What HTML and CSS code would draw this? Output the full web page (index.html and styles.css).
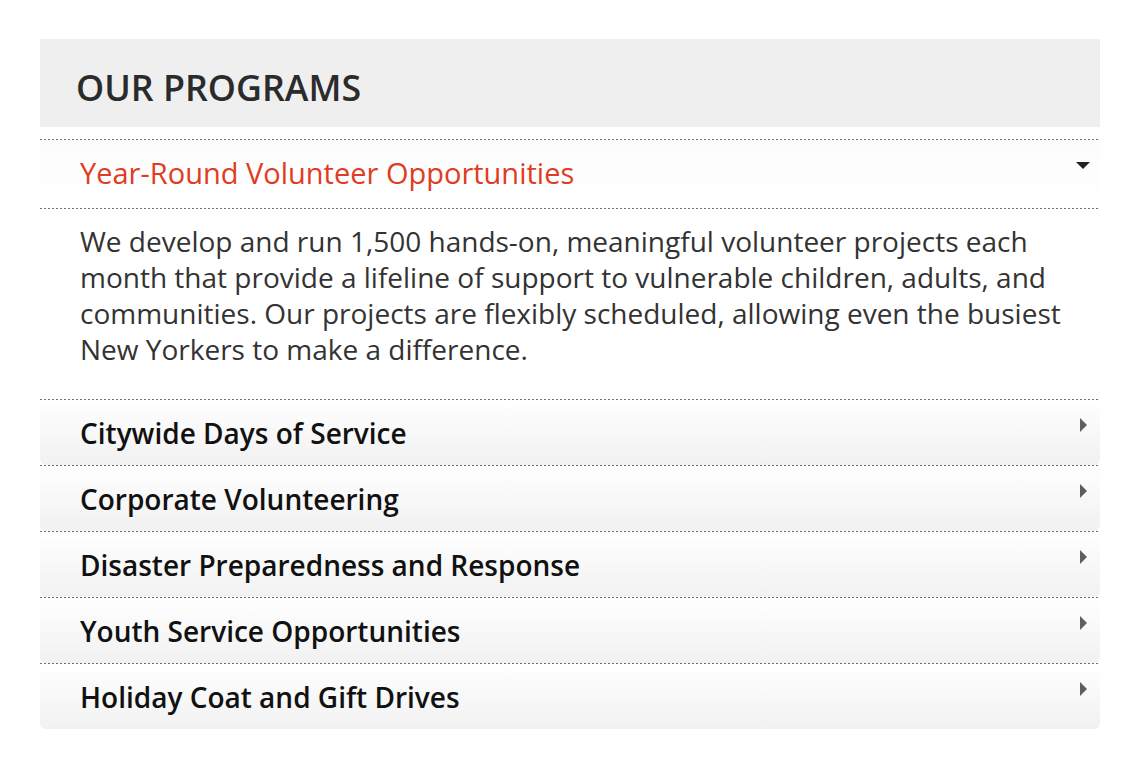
FILE: index.html
```html
<!DOCTYPE html>
<html lang="en">
<head>
<meta charset="utf-8">
<title>Our Programs</title>
<link rel="stylesheet" href="styles.css">
</head>
<body>
<section class="panel">
  <header class="panel-head">
    <h2 class="panel-title">OUR PROGRAMS</h2>
  </header>
  <div class="accordion">
    <div class="acc-item is-open">
      <div class="acc-head">
        <span class="acc-label">Year-Round Volunteer Opportunities</span>
        <span class="caret-down"></span>
      </div>
      <div class="acc-body">
        <p>We develop and run 1,500 hands-on, meaningful volunteer projects each month that provide a lifeline of support to vulnerable children, adults, and communities. Our projects are flexibly scheduled, allowing even the busiest New Yorkers to make a difference.</p>
      </div>
    </div>
    <div class="acc-item">
      <div class="acc-head"><span class="acc-label">Citywide Days of Service</span><span class="caret-right"></span></div>
    </div>
    <div class="acc-item">
      <div class="acc-head"><span class="acc-label">Corporate Volunteering</span><span class="caret-right"></span></div>
    </div>
    <div class="acc-item">
      <div class="acc-head"><span class="acc-label">Disaster Preparedness and Response</span><span class="caret-right"></span></div>
    </div>
    <div class="acc-item">
      <div class="acc-head"><span class="acc-label">Youth Service Opportunities</span><span class="caret-right"></span></div>
    </div>
    <div class="acc-item">
      <div class="acc-head"><span class="acc-label">Holiday Coat and Gift Drives</span><span class="caret-right"></span></div>
    </div>
  </div>
</section>
</body>
</html>
```

FILE: styles.css
```css
* { box-sizing: border-box; }
html, body { margin: 0; padding: 0; background: #fff; }
body { font-family: "Open Sans", "Noto Sans", sans-serif; }

.panel {
  width: 1060px;
  margin: 39px 0 0 40px;
}

.panel-head {
  background: #efefef;
  height: 88px;
  display: flex;
  align-items: center;
  padding: 8px 0 0 36px;
}
.panel-title {
  margin: 0;
  font-size: 35.8px;
  font-weight: 600;
  color: #2b2b2b;
}

.accordion { margin-top: 12px; }

.acc-item { position: relative; }
.acc-item::before {
  content: "";
  display: block;
  height: 1px;
  background: repeating-linear-gradient(to right, #6f6f6f 0 2px, transparent 2px 4px);
}

.acc-head {
  display: flex;
  align-items: center;
  justify-content: space-between;
  height: 65px;
  padding: 0 10px 0 40px;
  background: linear-gradient(#ffffff, #f1f1f1);
  border-radius: 0 0 6px 6px;
}
.acc-label {
  font-size: 28px;
  font-weight: 600;
  color: #111;
}

.is-open .acc-head {
  height: 68px;
  background: linear-gradient(#fcfcfc, #ffffff);
  border-radius: 0;
}
.is-open .acc-label {
  font-size: 29px;
  font-weight: 500;
  color: #e03c22;
  margin-top: -3px;
}

.caret-down {
  width: 0; height: 0;
  border-left: 7px solid transparent;
  border-right: 7px solid transparent;
  border-top: 7px solid #222;
  margin-top: -17px;
}
.caret-right {
  width: 0; height: 0;
  border-top: 7px solid transparent;
  border-bottom: 7px solid transparent;
  border-left: 7px solid #5e5e5e;
  margin-right: 3px;
  margin-top: -15px;
}

.acc-body {
  position: relative;
  padding: 15px 20px 32px 40px;
}
.acc-body::before {
  content: "";
  position: absolute;
  top: 0; left: 0; right: 0;
  height: 1px;
  background: repeating-linear-gradient(to right, #6f6f6f 0 2px, transparent 2px 4px);
}
.acc-body p {
  margin: 0;
  font-size: 28px;
  line-height: 36px;
  color: #333;
}
```
